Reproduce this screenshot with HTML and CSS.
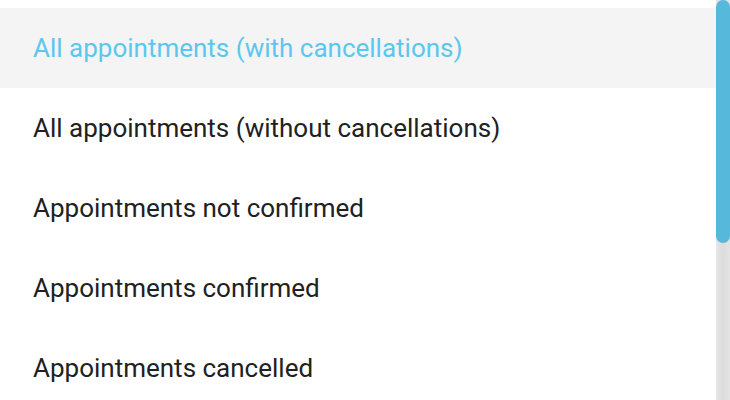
FILE: index.html
```html
<!DOCTYPE html>
<html>
<head>
<meta charset="utf-8">
<link rel="stylesheet" href="styles.css">
</head>
<body>
<div class="dropdown">
  <ul class="list">
    <li class="item active">All appointments (with cancellations)</li>
    <li class="item">All appointments (without cancellations)</li>
    <li class="item">Appointments not confirmed</li>
    <li class="item">Appointments confirmed</li>
    <li class="item">Appointments cancelled</li>
  </ul>
  <div class="scrollbar"><div class="thumb"></div></div>
</div>
</body>
</html>
```
FILE: styles.css
```css
html, body {
  margin: 0;
  padding: 0;
  background: #ffffff;
  overflow: hidden;
}
.dropdown {
  display: flex;
  width: 730px;
  height: 400px;
  overflow: hidden;
  font-family: Roboto, "Liberation Sans", sans-serif;
}
.list {
  flex: 1;
  list-style: none;
  margin: 0;
  padding: 8px 0 0 0;
}
.item {
  height: 80px;
  display: flex;
  align-items: center;
  padding-left: 33px;
  font-size: 26px;
  color: #212121;
}
.item.active {
  background: #f4f4f4;
  color: #5cc7ee;
}
.scrollbar {
  width: 14px;
  height: 400px;
  background: linear-gradient(to right, #e6e6e6, #dcdcdc 50%, #e4e4e4);
}
.thumb {
  height: 243px;
  background: #56b9dc;
  border-radius: 7px;
}
```
